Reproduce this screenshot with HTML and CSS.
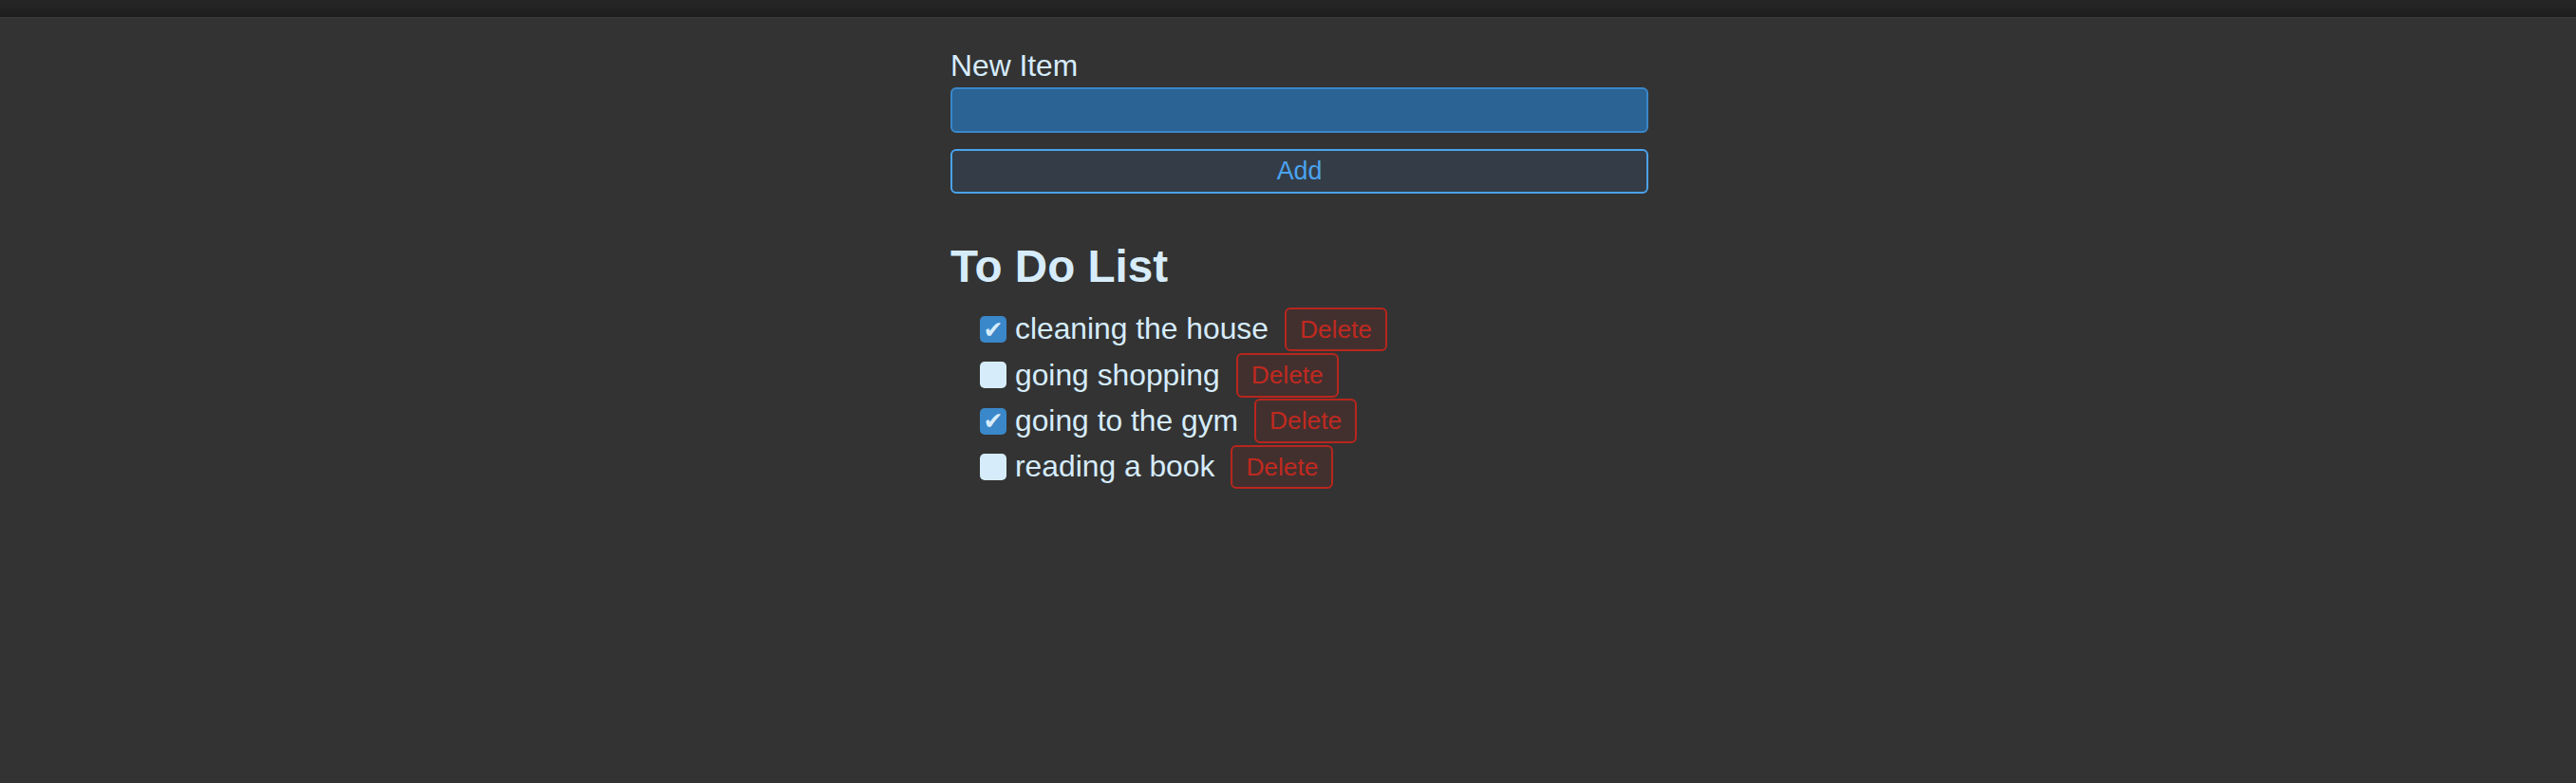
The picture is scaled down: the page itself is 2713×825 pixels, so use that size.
FILE: index.html
```html
<!DOCTYPE html>
<html lang="en">
<head>
<meta charset="utf-8">
<title>To Do List</title>
<link rel="stylesheet" href="styles.css">
</head>
<body>
<header class="topbar"></header>
<main class="page">
  <div class="app">
    <form class="new-item" onsubmit="return false">
      <label class="label" for="item">New Item</label>
      <input class="input" id="item" type="text">
      <button class="add-btn" type="submit">Add</button>
    </form>
    <h2 class="title">To Do List</h2>
    <ul class="list">
      <li class="row">
        <input class="check" type="checkbox" checked>
        <span class="text">cleaning the house</span>
        <button class="del-btn">Delete</button>
      </li>
      <li class="row">
        <input class="check" type="checkbox">
        <span class="text">going shopping</span>
        <button class="del-btn">Delete</button>
      </li>
      <li class="row">
        <input class="check" type="checkbox" checked>
        <span class="text">going to the gym</span>
        <button class="del-btn">Delete</button>
      </li>
      <li class="row">
        <input class="check" type="checkbox">
        <span class="text">reading a book</span>
        <button class="del-btn">Delete</button>
      </li>
    </ul>
  </div>
</main>
</body>
</html>
```
FILE: styles.css
```css
html, body {
  margin: 0;
  padding: 0;
  height: 100%;
}

body {
  background: #333333;
  font-family: "Liberation Sans", Arial, sans-serif;
  font-size: 31.8px;
  color: #d6ecfb;
}

.topbar {
  height: 18px;
  background: linear-gradient(#262626, #1e1e1e);
  border-bottom: 1px solid #3b3b3b;
}

.page {
  display: flex;
  justify-content: center;
  padding-left: 24px;
}

.app {
  width: 735px;
  padding-top: 33px;
}

.new-item {
  display: flex;
  flex-direction: column;
  margin: 0;
}

.label {
  display: block;
  line-height: 35.6px;
}

.input {
  box-sizing: border-box;
  height: 48px;
  margin-top: 4px;
  width: 100%;
  background: #2a6394;
  border: 2px solid #3b87c9;
  border-radius: 6px;
  outline: none;
  color: #d6ecfb;
  font: inherit;
}

.add-btn {
  box-sizing: border-box;
  height: 47px;
  margin-top: 17px;
  width: 100%;
  background: #343d47;
  border: 2px solid #4aa3f0;
  border-radius: 6px;
  color: #4aa3f0;
  font-family: "Liberation Sans", Arial, sans-serif;
  font-size: 26.8px;
  padding: 0;
  cursor: pointer;
}

.title {
  margin: 50px 0 0;
  font-size: 47.6px;
  font-weight: bold;
  line-height: 53.4px;
  color: #d6ecfb;
}

.list {
  list-style: none;
  margin: 16px 0 0;
  padding: 0 0 0 31px;
}

.row {
  display: flex;
  align-items: center;
  height: 48.3px;
}

.check {
  appearance: none;
  -webkit-appearance: none;
  margin: 0;
  width: 28px;
  height: 28px;
  border-radius: 5px;
  background: #d6ecfb;
  display: inline-flex;
  align-items: center;
  justify-content: center;
  flex: none;
}

.check:checked {
  background: #3a87c9;
}

.check:checked::after {
  content: "\2714";
  font-family: "DejaVu Sans", sans-serif;
  font-size: 25px;
  font-style: italic;
  line-height: 1;
  color: #d6ecfb;
}

.text {
  margin-left: 9px;
  line-height: 35.6px;
}

.del-btn {
  box-sizing: border-box;
  margin-left: 17px;
  height: 46.5px;
  padding: 0 14px;
  background: #42302f;
  border: 2px solid #b8261d;
  border-radius: 6px;
  color: #c0291f;
  font-family: "Liberation Sans", Arial, sans-serif;
  font-size: 26.3px;
  cursor: pointer;
}
```
